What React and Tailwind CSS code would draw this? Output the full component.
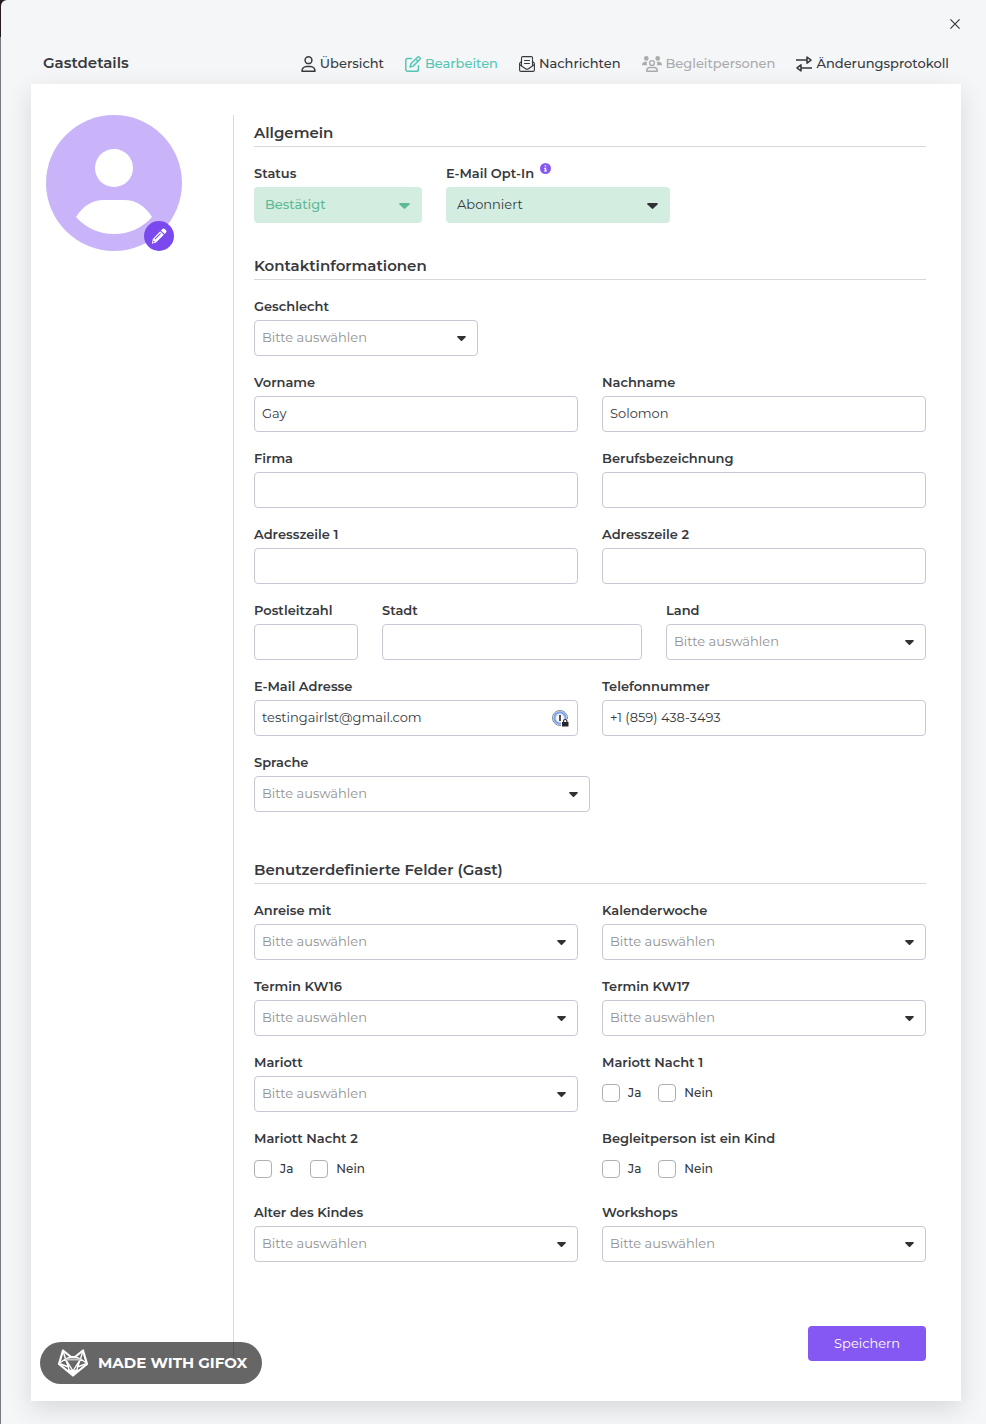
import React, { useId } from "react";

const DEFAULT_PLACEHOLDER = "Bitte auswählen";

const UserIcon = () => (
  <svg className="h-4 w-[15px] shrink-0" viewBox="0 0 15 16" fill="none" stroke="currentColor" strokeWidth="1.5" aria-hidden="true">
    <circle cx="7.5" cy="4.2" r="3.4" />
    <path d="M1 15.200C1 12.500 3 10.500 5.600 10.500h3.800c2.600 0 4.600 2 4.600 4.700z" strokeLinejoin="round" />
  </svg>
);

const EditIcon = () => (
  <svg className="h-4 w-4 shrink-0" viewBox="0 0 16 16" fill="none" stroke="currentColor" strokeWidth="1.5" strokeLinejoin="round" strokeLinecap="round" aria-hidden="true">
    <path d="M6.5 2.600H2.600A1.800 1.800 0 0 0 .8 4.400v9a1.800 1.800 0 0 0 1.800 1.800h9a1.800 1.800 0 0 0 1.800-1.800V9.700" />
    <path d="M12.500 1.200a1.300 1.300 0 0 1 1.800 0l.5.5a1.300 1.300 0 0 1 0 1.800L8.200 10.100l-3.200.9.900-3.200zM10.700 3l2.300 2.300" />
  </svg>
);

const MailIcon = () => (
  <svg className="h-4 w-4 shrink-0" viewBox="0 0 16 16" fill="none" stroke="currentColor" strokeWidth="1.100" strokeLinejoin="round" strokeLinecap="round" aria-hidden="true">
    <path d="M2.500 9.500V1.900A1.300 1.300 0 0 1 3.800.6h8.400a1.300 1.300 0 0 1 1.300 1.300v7.600" />
    <path d="M2.500 5.500 1.300 6.500a1.700 1.700 0 0 0-.7 1.300V14A1.400 1.400 0 0 0 2 15.400h12a1.400 1.400 0 0 0 1.400-1.400V7.800a1.700 1.700 0 0 0-.7-1.300l-1.200-1" />
    <path d="m.8 8.700 5.700 4a2.500 2.500 0 0 0 3 0l5.700-4M5.500 4.500h5M5.500 7.500h5" />
  </svg>
);

const GroupIcon = () => (
  <svg className="h-4 w-5 shrink-0" viewBox="0 0 20 16" fill="currentColor" aria-hidden="true">
    <circle cx="4.300" cy="2.400" r="2.300" />
    <circle cx="15.700" cy="2.400" r="2.300" />
    <path d="M0 9.200C0 7 1.300 5.700 3.200 5.700h2c-.7 1.200-.6 2.500.1 3.500zM20 9.200c0-2.200-1.300-3.500-3.200-3.500h-2c.7 1.200.6 2.500-.1 3.500z" />
    <g fill="none" stroke="currentColor" strokeWidth="1.400">
      <circle cx="10" cy="7" r="2.400" />
      <path d="M4.700 15.200c0-2.400 1.300-3.700 3.300-3.700h4c2 0 3.300 1.300 3.300 3.700z" strokeLinejoin="round" />
    </g>
  </svg>
);

const SwapIcon = () => (
  <svg className="h-4 w-4 shrink-0" viewBox="0 0 16 16" fill="none" stroke="currentColor" strokeWidth="1.500" strokeLinejoin="round" aria-hidden="true">
    <path d="M0 4.100h11M11 1v6.200l4-3.100zM16 11.900H5M5 8.800V15l-4-3.100z" />
  </svg>
);

const CloseIcon = () => (
  <svg className="h-[10px] w-[10px]" viewBox="0 0 10 10" fill="none" stroke="currentColor" strokeWidth="1.200" aria-hidden="true">
    <path d="M.4.4l9.200 9.200M9.600.4.4 9.600" />
  </svg>
);

const PencilIcon = () => (
  <svg className="h-4 w-4" viewBox="0 0 16 16" fill="currentColor" aria-hidden="true">
    <path d="M11.200 1.200a2 2 0 0 1 2.900 0l.7.7a2 2 0 0 1 0 2.900l-1.200 1.200-3.600-3.600zM9.200 3.200l3.600 3.600-7.700 7.700-4.300 1.200 1-4.700zM9.300 5 3.500 10.800l.7.7L10 5.700zM2.400 12.400l-.5 2 2-.5z" fillRule="evenodd" />
  </svg>
);

const InfoIcon = () => (
  <svg className="h-[11px] w-[11px]" viewBox="0 0 11 11" aria-hidden="true">
    <circle cx="5.500" cy="5.500" r="5.500" fill="#8658f3" />
    <path d="M4.700 2.200h1.500v1.400H4.700zM4.100 4.700h2.100v2.900h.7v1H4.100v-1h.7V5.700h-.7z" fill="#fff" />
  </svg>
);

const PasswordManagerIcon = () => (
  <svg className="pointer-events-none absolute top-[10px] right-[9px] h-[17px] w-[17px]" viewBox="0 0 17 17" aria-hidden="true">
    <circle cx="8" cy="8" r="7.500" fill="#fff" stroke="#85888e" strokeWidth="1" />
    <circle cx="8" cy="8" r="5.600" fill="none" stroke="#7ba4f7" strokeWidth="2.200" />
    <circle cx="8" cy="8" r="4.200" fill="#fff" stroke="#a8abb0" strokeWidth=".5" />
    <path d="M7.200 5h1.600v6H7.200z" fill="#26282c" />
    <path d="M9 9h8v8H9z" fill="#fff" />
    <path d="M10 12h6.500v4.500H10z" fill="#26282c" />
    <path d="M11.500 12v-.8a1.700 1.700 0 0 1 3.400 0v.8" fill="none" stroke="#26282c" strokeWidth="1.200" />
  </svg>
);

const FoxIcon = () => (
  <svg className="h-7 w-[30px] shrink-0" viewBox="0 0 30 28" fill="none" stroke="#fff" strokeLinejoin="round" aria-hidden="true">
    <path d="M5 1.500 1 15l14 11.500L29 15 25 1.500l-8 6.500h-4z" strokeWidth="2.200" />
    <path d="M5 1.500 7.500 10M25 1.500 22.500 10M1.500 14 7.500 10 13 8M28.500 14l-6-4L17 8M7.500 10 15 22l7.500-12M7.500 10l3 8L1.500 14.500M22.500 10l-3 8 9-3.500M10.500 18l.5 5M19.500 18l-.5 5" strokeWidth="1.400" />
    <path d="M7.500 10.500h15" stroke="#c4c4c4" strokeWidth="2" />
    <path d="m10.500 20.500 4.500 1.500 4.500-1.500L15 27z" fill="#fff" strokeWidth="1" />
  </svg>
);

const Label = ({ htmlFor, children }) => (
  <label htmlFor={htmlFor} className="mb-1 block h-5 text-[13px] leading-5 font-semibold whitespace-nowrap">
    {children}
  </label>
);

const TextField = ({ label, value = "", type = "text", icon }) => {
  const id = useId();

  return (
    <div>
      <Label htmlFor={id}>{label}</Label>
      <div className="relative">
        <input
          id={id}
          type={type}
          defaultValue={value}
          className="block h-9 w-full rounded border border-[#c6c9d1] bg-white px-[7px] pb-[3px] text-[13px] outline-none focus:border-[#8658f3]"
        />
        {icon}
      </div>
    </div>
  );
};

const selectStyles = {
  default: "border border-[#c6c9d1] bg-white px-[7px] text-[#929292]",
  green: "bg-[#d3eee1] px-[11px] text-[#37393d]",
  status: "bg-[#d3eee1] px-[11px] font-medium text-[#5fb994]",
};

const SelectField = ({ label, value = DEFAULT_PLACEHOLDER, variant = "default", info, className = "" }) => {
  const id = useId();

  return (
    <div className={className}>
      <Label htmlFor={id}>
        {label}
        {info && <span className="ml-1.5 inline-block align-top">{info}</span>}
      </Label>
      <div className="relative">
        <select
          id={id}
          defaultValue={value}
          className={`block h-9 w-full appearance-none rounded pb-px text-[13px] outline-none ${selectStyles[variant]}`}
        >
          <option>{value}</option>
        </select>
        <svg
          className={`pointer-events-none absolute top-4 right-3 ${variant === "default" ? "h-[5px] w-[9px]" : "h-[6px] w-[11px]"} ${variant === "status" ? "text-[#5fb994]" : "text-[#303236]"}`}
          viewBox="0 0 10 6"
          preserveAspectRatio="none"
          fill="currentColor"
          aria-hidden="true"
        >
          <path d="M1 0h8a.8.8 0 0 1 .6 1.400L5.700 5.600a1 1 0 0 1-1.400 0L.4 1.400A.8.8 0 0 1 1 0z" />
        </svg>
      </div>
    </div>
  );
};

const CheckboxField = ({ label }) => (
  <fieldset className="pb-2">
    <legend className="block h-5 text-[13px] leading-5 font-semibold">{label}</legend>
    <div className="mt-3 flex gap-[17px]">
      {["Ja", "Nein"].map((option) => (
        <label key={option} className="flex h-[18px] items-center gap-2 text-xs font-medium">
          <input
            type="checkbox"
            className="h-[18px] w-[18px] appearance-none rounded border border-[#aeb0b4] bg-white checked:bg-[#8658f3]"
          />
          {option}
        </label>
      ))}
    </div>
  </fieldset>
);

const Section = ({ title, children, className = "" }) => (
  <section className={className}>
    <h2 className="mb-4 border-b border-[#d5d7da] text-[15px] leading-[26px] font-semibold">{title}</h2>
    {children}
  </section>
);

const tabs = [
  { label: "Übersicht", icon: <UserIcon /> },
  { label: "Bearbeiten", icon: <EditIcon />, color: "text-[#55c6b4]" },
  { label: "Nachrichten", icon: <MailIcon /> },
  { label: "Begleitpersonen", icon: <GroupIcon />, color: "text-[#a9abad]" },
  { label: "Änderungsprotokoll", icon: <SwapIcon /> },
];

const Header = () => (
  <header>
    <div className="flex h-12 items-center justify-end">
      <button type="button" aria-label="Schließen" className="p-px">
        <CloseIcon />
      </button>
    </div>
    <div className="flex h-9 items-start justify-between px-3 pt-[3px]">
      <h1 className="text-[15px] leading-6 font-semibold">Gastdetails</h1>
      <nav className="flex gap-[21px]">
        {tabs.map((tab) => (
          <a
            key={tab.label}
            href="#"
            className={`flex h-[26px] items-center gap-1 text-[13px] font-medium whitespace-nowrap ${tab.color || ""}`}
          >
            {tab.icon}
            {tab.label}
          </a>
        ))}
      </nav>
    </div>
  </header>
);

const Avatar = () => (
  <div className="relative h-[136px] w-[136px]">
    <svg className="h-full w-full" viewBox="0 0 136 136" aria-hidden="true">
      <circle cx="68" cy="68" r="68" fill="#c9b4f9" />
      <circle cx="68" cy="53" r="19" fill="#fff" />
      <path d="M30 102C37 91 46 85 58 85h20c12 0 21 6 28 17-10 11-23 17-38 17s-28-6-38-17z" fill="#fff" />
    </svg>
    <button
      type="button"
      aria-label="Bild bearbeiten"
      className="absolute right-2 bottom-0 flex h-[30px] w-[30px] items-center justify-center rounded-full bg-[#7b4aef] text-white"
    >
      <PencilIcon />
    </button>
  </div>
);

const App = () => {
  return (
    <div className="min-h-screen bg-[linear-gradient(#241c22_37px,#747982_37px)] pl-px font-['Montserrat','Inter','Open_Sans',sans-serif] text-[#37393d]">
      <div className="min-h-screen rounded-tl-md bg-[#f5f6f8] pr-[25px] pb-[23px] pl-[30px]">
        <Header />
        <main className="relative flex bg-white pt-[31px] pr-[35px] pb-10 pl-[15px] shadow-[0_8px_24px_rgba(0,0,0,0.12)]">
          <aside className="w-[187px] shrink-0">
            <Avatar />
          </aside>

          <form className="min-w-0 flex-1 border-l border-[#d9dadd] pt-[5px] pl-5">
            <Section title="Allgemein">
              <div className="flex gap-6">
                <SelectField label="Status" value="Bestätigt" variant="status" className="w-1/4" />
                <SelectField label="E-Mail Opt-In" value="Abonniert" variant="green" info={<InfoIcon />} className="w-1/3" />
              </div>
            </Section>

            <Section title="Kontaktinformationen" className="mt-[30px]">
              <div className="flex flex-col gap-4">
                <SelectField label="Geschlecht" className="w-1/3" />
                <div className="grid grid-cols-2 gap-x-6 gap-y-4">
                  <TextField label="Vorname" value="Gay" />
                  <TextField label="Nachname" value="Solomon" />
                  <TextField label="Firma" />
                  <TextField label="Berufsbezeichnung" />
                  <TextField label="Adresszeile 1" />
                  <TextField label="Adresszeile 2" />
                </div>
                <div className="grid grid-cols-[104px_1fr_1fr] gap-6">
                  <TextField label="Postleitzahl" />
                  <TextField label="Stadt" />
                  <SelectField label="Land" />
                </div>
                <div className="grid grid-cols-2 gap-6">
                  <TextField label="E-Mail Adresse" type="email" value="testingairlst@gmail.com" icon={<PasswordManagerIcon />} />
                  <TextField label="Telefonnummer" type="tel" value="+1 (859) 438-3493" />
                </div>
                <SelectField label="Sprache" className="w-1/2" />
              </div>
            </Section>

            <Section title="Benutzerdefinierte Felder (Gast)" className="mt-[45px]">
              <div className="grid grid-cols-2 gap-x-6 gap-y-4">
                <SelectField label="Anreise mit" />
                <SelectField label="Kalenderwoche" />
                <SelectField label="Termin KW16" />
                <SelectField label="Termin KW17" />
                <SelectField label="Mariott" />
                <CheckboxField label="Mariott Nacht 1" />
                <CheckboxField label="Mariott Nacht 2" />
                <CheckboxField label="Begleitperson ist ein Kind" />
                <SelectField label="Alter des Kindes" />
                <SelectField label="Workshops" />
              </div>
            </Section>

            <div className="mt-16 flex justify-end">
              <button type="submit" className="h-[35px] rounded bg-[#8658f3] px-[26px] text-[13px] text-white">
                Speichern
              </button>
            </div>
          </form>

          <div className="absolute bottom-[17px] left-[9px] flex h-[42px] items-center gap-[10px] rounded-full bg-black/60 pr-[15px] pl-[18px] text-[15px] font-bold whitespace-nowrap text-white">
            <FoxIcon />
            MADE WITH GIFOX
          </div>
        </main>
      </div>
    </div>
  );
};

export default App;
